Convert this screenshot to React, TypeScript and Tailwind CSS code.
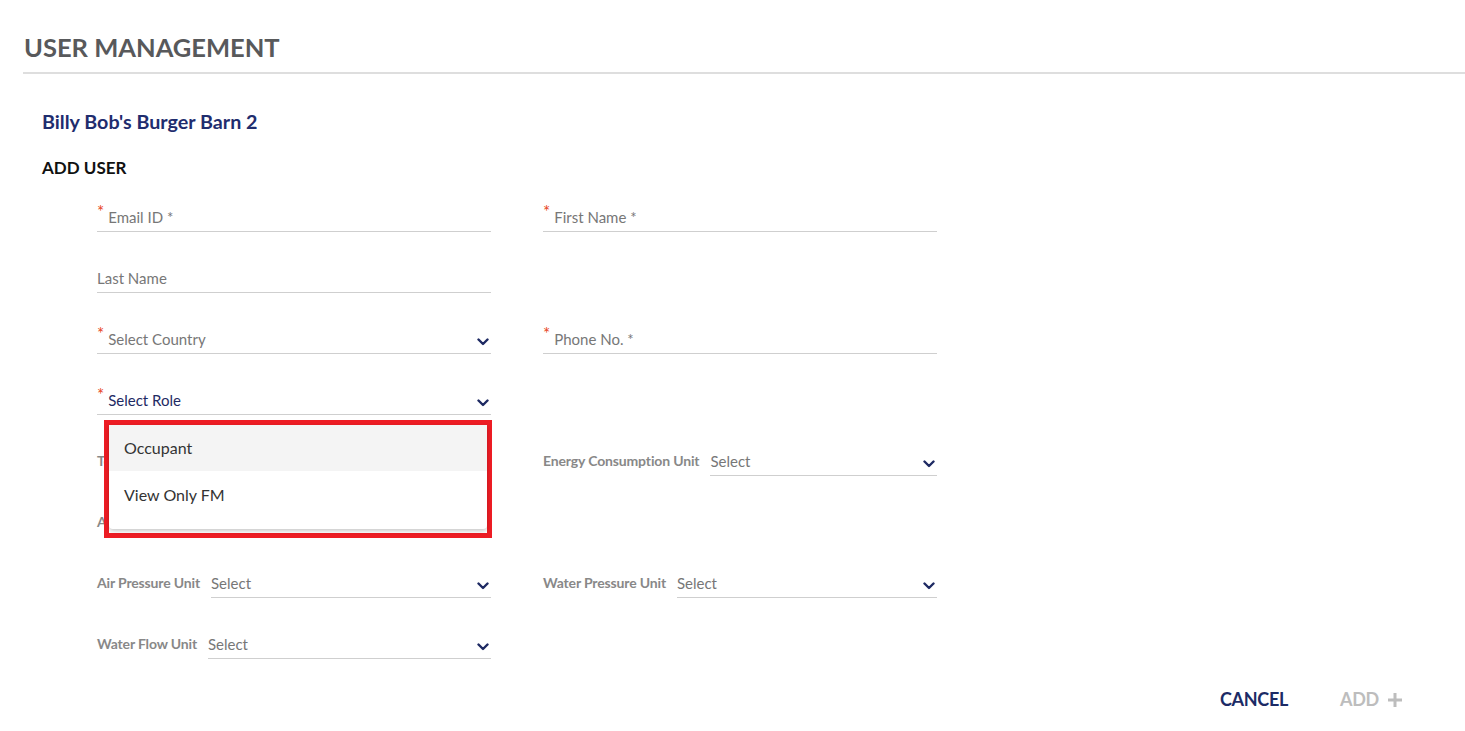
import React from "react";

const Chevron = () => (
  <svg width="12" height="8" viewBox="0 0 12 8" className="shrink-0 mb-[3px] mr-[2px]">
    <polyline points="1.5,1.5 6,6 10.5,1.5" fill="none" stroke="#1e2a63" strokeWidth="2.4" strokeLinecap="round" strokeLinejoin="round" />
  </svg>
);

function Star() {
  return <span className="relative -top-[7px] mr-[4px] text-[17px] leading-none text-[#e8461e]">*</span>;
}

function TextField({ label, required }: { label: string; required?: boolean }) {
  return (
    <div className="flex h-[37px] items-end border-b border-[#cfcfcf] pb-[4px] text-[15px] leading-[20px] text-[#777]">
      {required && <Star />}
      <span>{label}</span>
    </div>
  );
}

function SelectField({ label, required, active }: { label: string; required?: boolean; active?: boolean }) {
  return (
    <div className="flex h-[37px] items-end border-b border-[#cfcfcf] pb-[4px] text-[15px] leading-[20px]">
      {required && <Star />}
      <span className={active ? "flex-1 text-[#1e2a63]" : "flex-1 text-[#777]"}>{label}</span>
      <Chevron />
    </div>
  );
}

function UnitField({ label }: { label: string }) {
  return (
    <div className="flex h-[37px] items-end">
      <span className="mb-[5px] mr-[11px] whitespace-nowrap text-[14px] font-bold leading-[20px] tracking-[-0.15px] text-[#888]">
        {label}
      </span>
      <div className="flex h-full flex-1 items-end border-b border-[#cfcfcf] pb-[4px] text-[15px] leading-[20px] text-[#777]">
        <span className="flex-1">Select</span>
        <Chevron />
      </div>
    </div>
  );
}

function RoleMenu() {
  return (
    <div className="absolute left-[7px] top-[42px] z-10 h-[118px] w-[388px] border-[5px] border-[#ed1c24] bg-white">
      <div className="rounded-b-[4px] bg-white pb-[10px] shadow-[0_2px_4px_rgba(0,0,0,0.22)]">
        <div className="flex h-[46px] items-center bg-[#f4f4f4] px-[15px] text-[16px] text-[#333]">Occupant</div>
        <div className="flex h-[48px] items-center px-[15px] text-[16px] text-[#333]">View Only FM</div>
      </div>
    </div>
  );
}

export default function App() {
  return (
    <div className="min-h-screen bg-white font-['Lato',sans-serif]">
      <div className="pl-[23px] pt-[30px]">
        <h1 className="border-b-2 border-[#dedede] pb-[8px] pl-[1px] text-[25.5px] font-bold leading-[34px] text-[#58595b]">
          USER MANAGEMENT
        </h1>
      </div>

      <div className="pl-[42px] pt-[35px]">
        <h2 className="text-[19.7px] font-bold leading-[26px] text-[#1f2d6e]">Billy Bob's Burger Barn 2</h2>
        <h3 className="mt-[22px] text-[17px] font-bold leading-[22px] text-[#111]">ADD USER</h3>

        <div className="ml-[55px] mt-[16px] grid w-[840px] grid-cols-2 gap-x-[52px] gap-y-[24px]">
          <TextField label="Email ID *" required />
          <TextField label="First Name *" required />

          <TextField label="Last Name" />
          <div />

          <SelectField label="Select Country" required />
          <TextField label="Phone No. *" required />

          <div className="relative">
            <SelectField label="Select Role" required active />
            <RoleMenu />
          </div>
          <div />

          <UnitField label="Temperature Unit" />
          <UnitField label="Energy Consumption Unit" />

          <UnitField label="Area Unit" />
          <div />

          <UnitField label="Air Pressure Unit" />
          <UnitField label="Water Pressure Unit" />

          <UnitField label="Water Flow Unit" />
          <div />
        </div>
      </div>

      <div className="flex justify-end gap-[52px] pr-[62px] pt-[27px]">
        <button className="text-[18px] font-bold tracking-[-0.3px] text-[#1c2b66]">CANCEL</button>
        <button className="flex items-center gap-[8px] text-[18px] font-bold tracking-[-0.3px] text-[#bdbdbd]">
          ADD
          <svg width="16" height="16" viewBox="0 0 16 16">
            <path d="M8 1v14M1 8h14" stroke="#bdbdbd" strokeWidth="3" />
          </svg>
        </button>
      </div>
    </div>
  );
}
